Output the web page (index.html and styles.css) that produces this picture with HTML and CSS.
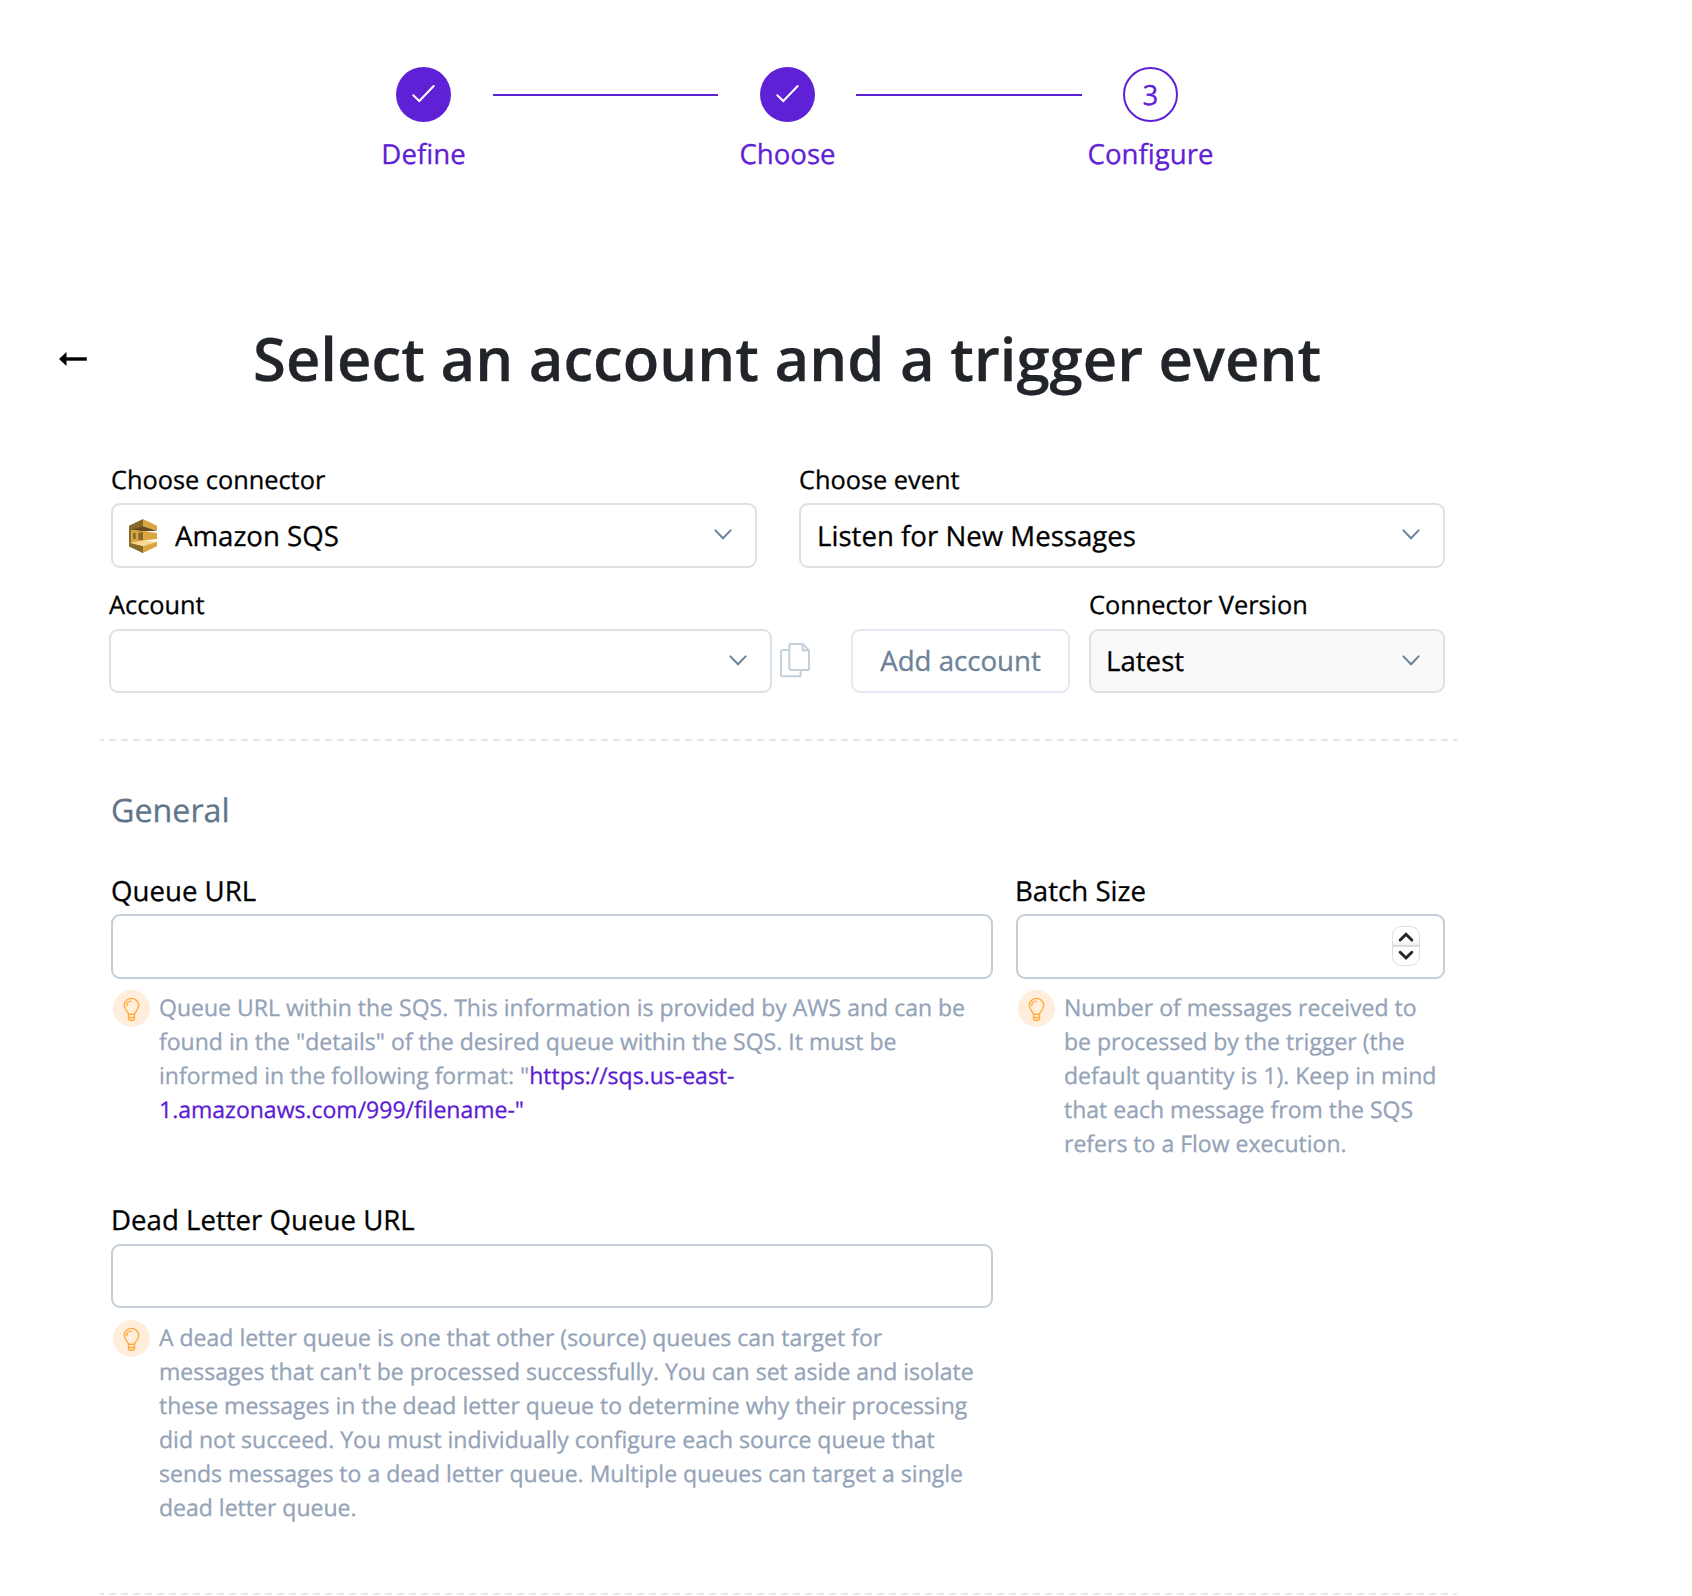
FILE: index.html
```html
<!DOCTYPE html>
<html lang="en">
<head>
<meta charset="utf-8">
<title>Configure trigger</title>
<link rel="stylesheet" href="styles.css">
</head>
<body>
<svg class="defs" width="0" height="0" aria-hidden="true">
  <symbol id="chevron" viewBox="0 0 18 11"><path d="M1.4 1.4 9 9.2l7.600-7.800" fill="none" stroke="currentColor" stroke-width="2" stroke-linecap="round"/></symbol>
  <symbol id="check" viewBox="0 0 55 55"><path d="M17.300 28.200 23.300 34 37.700 19" fill="none" stroke="#fff" stroke-width="2" stroke-linecap="round"/></symbol>
  <symbol id="bulb" viewBox="0 0 37 37">
    <g fill="none" stroke="#ffab3d" stroke-width="1.400" stroke-linecap="round" stroke-linejoin="round">
      <path d="M15.500 24.300c0-2.600-4.200-4.400-4.200-8.700a7.200 7.200 0 0 1 14.400 0c0 4.300-4.200 6.100-4.200 8.700z"/>
      <path d="M15.500 24.300v4c0 1.200.8 2 1.800 2h2.400c1 0 1.800-.8 1.800-2v-4M15.500 27.500h6"/>
      <path d="M13.700 15.600a4.800 4.800 0 0 1 4.600-4.500"/>
    </g>
  </symbol>
</svg>

<main class="page">
  <ol class="stepper">
    <li class="step">
      <span class="step-dot done"><svg width="55" height="55"><use href="#check"/></svg></span>
      <span class="step-label">Define</span>
    </li>
    <li class="step-line"></li>
    <li class="step">
      <span class="step-dot done"><svg width="55" height="55"><use href="#check"/></svg></span>
      <span class="step-label">Choose</span>
    </li>
    <li class="step-line"></li>
    <li class="step">
      <span class="step-dot">3</span>
      <span class="step-label">Configure</span>
    </li>
  </ol>

  <header class="heading">
    <svg class="back" width="28" height="14" viewBox="0 0 28 14"><path d="M0 7 7.500 0v14z"/><path d="M7 5.300h20.800v3.400H7z"/></svg>
    <h1>Select an account and a trigger event</h1>
  </header>

  <section class="row connector-row">
    <div class="field">
      <label>Choose connector</label>
      <div class="select">
        <svg class="sqs" width="28" height="34" viewBox="0 0 84 102">
          <path fill="#876929" d="M0 20 42 0v24L6 34v40l36 8v20L0 82z"/>
          <path fill="#d9a741" d="m42 0 42 20v15L42 22z"/>
          <path fill="#624a1e" d="m5 33 37-11 42 13-42 2z"/>
          <path fill="#d9a741" d="M6 32 42 37v29L6 75z"/>
          <path fill="#876929" d="M12 42h8v18l-8 1zM28 41l14-2v25l-14-2z"/>
          <path fill="#d9a741" d="m42 36 42 6v18l-42 5z"/>
          <path fill="#fad791" d="m0 72 42-7 42 3-42 14z"/>
          <path fill="#876929" d="m0 71 42 11v20L0 82z"/>
          <path fill="#d9a741" d="m42 82 42-14v14l-42 20z"/>
        </svg>
        <span class="value">Amazon SQS</span>
        <svg class="chevron" width="18" height="11"><use href="#chevron"/></svg>
      </div>
    </div>
    <div class="field">
      <label>Choose event</label>
      <div class="select">
        <span class="value">Listen for New Messages</span>
        <svg class="chevron" width="18" height="11"><use href="#chevron"/></svg>
      </div>
    </div>
  </section>

  <section class="row account-row">
    <div class="field">
      <label>Account</label>
      <div class="select">
        <span class="value"></span>
        <svg class="chevron" width="18" height="11"><use href="#chevron"/></svg>
      </div>
    </div>
    <svg class="copy" width="30" height="35" viewBox="0 0 90 105">
      <g fill="none" stroke="#c3cfd9" stroke-width="6" stroke-linejoin="round">
        <path d="M28 21H8q-5 0-5 5v69q0 5 5 5h49q5 0 5-5V82"/>
        <path d="M33 3h35l19 19v55q0 4-5 4H33q-5 0-5-5V8q0-5 5-5z"/>
        <path d="M68 3v19h19"/>
      </g>
    </svg>
    <button class="add" type="button">Add account</button>
    <div class="field version">
      <label>Connector Version</label>
      <div class="select muted">
        <span class="value">Latest</span>
        <svg class="chevron" width="18" height="11"><use href="#chevron"/></svg>
      </div>
    </div>
  </section>

  <div class="divider"></div>

  <h2>General</h2>

  <section class="row general-row">
    <div class="field">
      <label>Queue URL</label>
      <div class="input"></div>
      <div class="hint">
        <svg width="37" height="37"><use href="#bulb"/></svg>
        <p>Queue URL within the SQS. This information is provided by AWS and can be found in the "details" of the desired queue within the SQS. It must be informed in the following format: "<a>https://sqs.us-east-</a><wbr><a>1.amazonaws.com/999/filename-"</a></p>
      </div>
    </div>
    <div class="field batch">
      <label>Batch Size</label>
      <div class="input">
        <svg class="spinner" width="32" height="46" viewBox="0 0 32 46">
          <defs><linearGradient id="key" x1="0" y1="0" x2="0" y2="1"><stop offset="0" stop-color="#fff"/><stop offset=".32" stop-color="#fff"/><stop offset=".5" stop-color="#ededed"/><stop offset=".51" stop-color="#fff"/></linearGradient></defs>
          <rect x="2.500" y="3.500" width="27" height="39" rx="9" fill="url(#key)" stroke="#dedede"/>
          <path d="M2.500 23h27" stroke="#d2d2d2" stroke-width="1.500"/>
          <path d="m10.200 17 5.800-5.700 5.800 5.700M10.200 29.300l5.800 5.700 5.800-5.700" fill="none" stroke="#262626" stroke-width="3" stroke-linecap="round"/>
        </svg>
      </div>
      <div class="hint">
        <svg width="37" height="37"><use href="#bulb"/></svg>
        <p>Number of messages received to be processed by the trigger (the default quantity is 1). Keep in mind that each message from the SQS refers to a Flow execution.</p>
      </div>
    </div>
    <div class="field dead-letter">
      <label>Dead Letter Queue URL</label>
      <div class="input"></div>
      <div class="hint">
        <svg width="37" height="37"><use href="#bulb"/></svg>
        <p>A dead letter queue is one that other (source) queues can target for messages that can't be processed successfully. You can set aside and isolate these messages in the dead letter queue to determine why their processing did not succeed. You must individually configure each source queue that sends messages to a dead letter queue. Multiple queues can target a single dead letter queue.</p>
      </div>
    </div>
  </section>

  <div class="divider last"></div>
</main>
</body>
</html>
```

FILE: styles.css
```css
* { box-sizing: border-box; }

body {
  margin: 0;
  background: #fff;
  color: #000;
  font-family: "Open Sans", "Noto Sans", sans-serif;
  font-size: 27.63px;
  text-rendering: geometricPrecision;
  -webkit-text-stroke: 0.3px;
}

svg { display: block; flex: none; }
.defs { position: absolute; }

.page {
  width: 1692px;
  height: 1596px;
  overflow: hidden;
  padding-top: 67px;
}

/* Stepper */
.stepper {
  display: flex;
  align-items: flex-start;
  list-style: none;
  margin: 0 0 0 396px;
  padding: 0;
  height: 106px;
  color: #5f21d6;
}
.step {
  display: flex;
  flex-direction: column;
  align-items: center;
  gap: 13px;
  width: 55px;
}
.step-dot {
  width: 55px;
  height: 55px;
  border: 2px solid #5f21d6;
  border-radius: 50%;
  line-height: 52px;
  text-align: center;
}
.step-dot.done { border: 0; background: #5f21d6; }
.step-label { line-height: 38px; white-space: nowrap; }
.step-line {
  width: 225px;
  height: 2px;
  margin: 27px 42px 0;
  background: #5f21d6;
}
.step-line + .step + .step-line { width: 226px; margin: 27px 41px 0; }

/* Heading */
.heading {
  display: flex;
  align-items: center;
  height: 80px;
  margin: 145px 0 65px 59px;
}
.back { margin-top: 2px; }
h1 {
  margin: 0 0 0 166px;
  color: #212529;
  font-size: 59.83px;
  font-weight: 600;
  line-height: 80px;
  white-space: nowrap;
}

/* Form */
.row { display: grid; }
.field { display: flex; flex-direction: column; }
.connector-row {
  grid-template-columns: 646px 646px;
  column-gap: 42px;
  margin-left: 111px;
}
.account-row {
  grid-template-columns: 663px 79px 219px 375px;
  align-items: end;
  margin: 20px 0 46px 109px;
}
.connector-row label,
.account-row label {
  margin-bottom: 6px;
  font-size: 25.33px;
  line-height: 34px;
}
.account-row label { margin-bottom: 7px; }

.select {
  display: flex;
  align-items: center;
  height: 65px;
  padding: 0 23px 0 16px;
  border: 2px solid #dde1e6;
  border-radius: 9px;
  white-space: nowrap;
}
.account-row .select { height: 64px; }
.select.muted { background: #f9f9f9; }
.value { flex: 1; }
.chevron { margin-top: -3px; color: #6c8298; }
.account-row .chevron { margin-top: -2px; }
.sqs { margin-right: 18px; }

.copy { margin: 0 0 15px 8px; }
.add {
  height: 64px;
  padding: 0 0 2px;
  border: 2px solid #e3e9f3;
  border-radius: 9px;
  background: #fff;
  color: #6c8298;
  font: inherit;
}
.version { padding-left: 19px; }
.muted { padding-left: 15px; }

.divider {
  width: 1357px;
  height: 2px;
  margin-left: 100px;
  background: repeating-linear-gradient(90deg, #e3e9f3 0 6.300px, transparent 6.300px 12px) -2.500px 0 / 1368px 2px;
}

h2 {
  margin: 48px 0 39px 111px;
  color: #60748a;
  font-size: 32.25px;
  font-weight: 400;
  line-height: 44px;
}

.general-row {
  grid-template-columns: 882px 429px;
  grid-template-rows: 329px auto;
  column-gap: 23px;
  margin-left: 111px;
}
.general-row label { margin-bottom: 4px; line-height: 38px; }
.batch label { text-indent: -1px; }
.input {
  display: flex;
  align-items: center;
  justify-content: flex-end;
  height: 65px;
  padding-right: 21px;
  border: 2px solid #c3ced8;
  border-radius: 9px;
}
.spinner { margin-top: -2px; }
.dead-letter .input { height: 64px; margin-top: 1px; }

.hint {
  display: flex;
  gap: 9px;
  padding: 11px 9px 0 2px;
  color: #94a3b8;
  font-size: 23.03px;
  line-height: 34px;
}
.batch .hint { padding-right: 0; }
.dead-letter .hint { padding-top: 12px; padding-right: 14px; }
.hint svg { border-radius: 50%; background: #ffeedb; }
.hint p { margin: 0; }
.hint a { color: #5c1bd3; }

.divider.last { margin-top: 69px; }
```
